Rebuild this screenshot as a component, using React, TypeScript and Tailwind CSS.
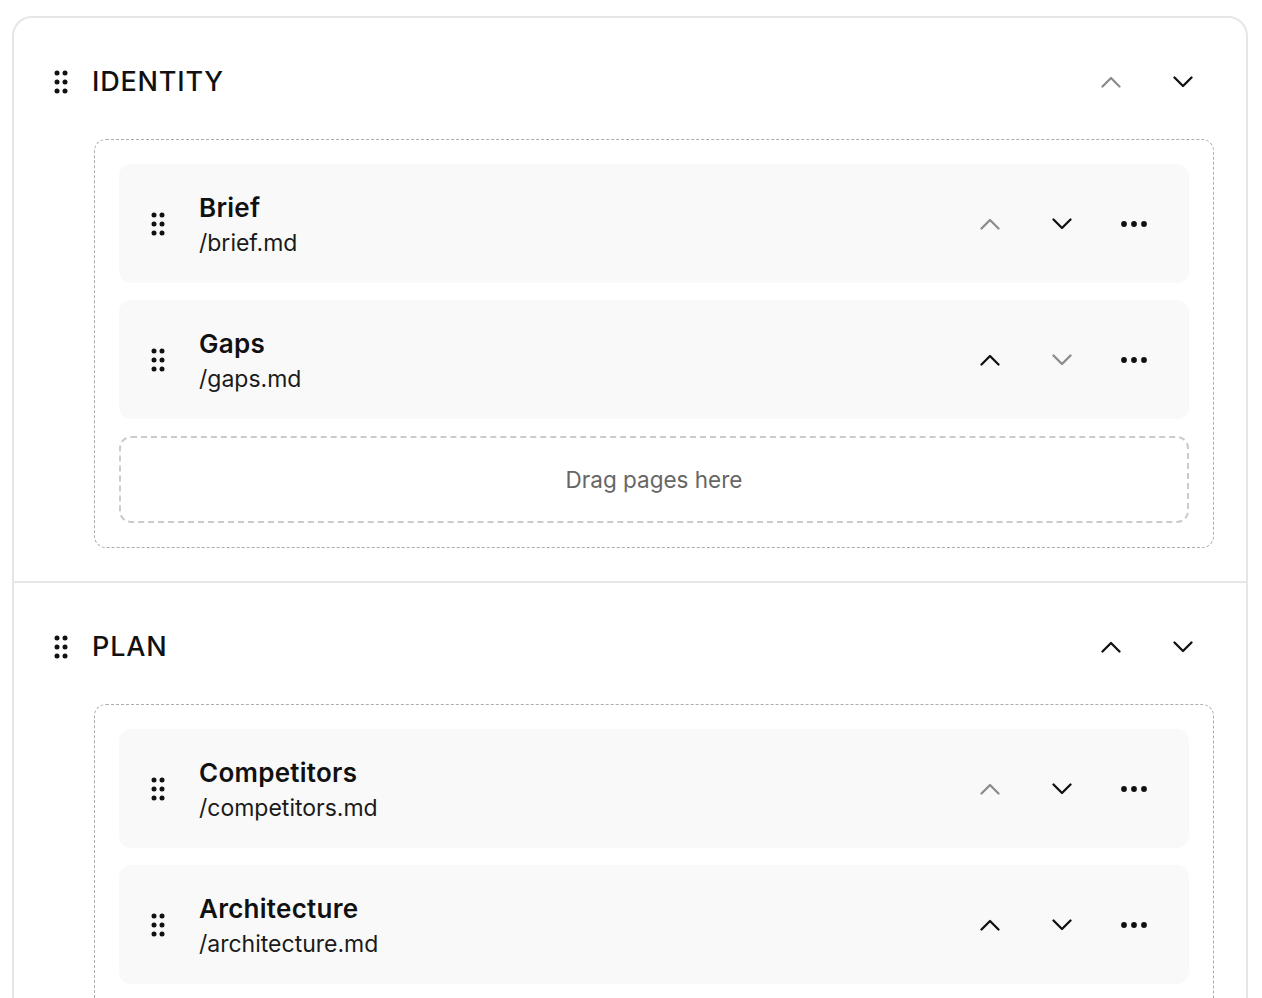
type Page = { title: string; path: string };

type Section = { name: string; pages: Page[] };

const SECTIONS: Section[] = [
  {
    name: 'IDENTITY',
    pages: [
      { title: 'Brief', path: '/brief.md' },
      { title: 'Gaps', path: '/gaps.md' },
    ],
  },
  {
    name: 'PLAN',
    pages: [
      { title: 'Competitors', path: '/competitors.md' },
      { title: 'Architecture', path: '/architecture.md' },
      { title: 'Roadmap', path: '/roadmap.md' },
    ],
  },
  {
    name: 'LAUNCH',
    pages: [{ title: 'Checklist', path: '/checklist.md' }],
  },
];

function Grip() {
  return (
    <svg width="14" height="24" viewBox="0 0 14 24" className="shrink-0 text-[#111]" fill="currentColor">
      <circle cx="3" cy="3" r="2.5" />
      <circle cx="11" cy="3" r="2.5" />
      <circle cx="3" cy="12" r="2.5" />
      <circle cx="11" cy="12" r="2.5" />
      <circle cx="3" cy="21" r="2.5" />
      <circle cx="11" cy="21" r="2.5" />
    </svg>
  );
}

function Chevron({ up, muted }: { up?: boolean; muted?: boolean }) {
  return (
    <button className={`w-12 h-12 flex items-center justify-center ${muted ? 'text-[#8c8c8c]' : 'text-[#111]'}`}>
      <svg width="20" height="12" viewBox="0 0 20 12" fill="none" stroke="currentColor" strokeWidth="2.3" strokeLinecap="round" strokeLinejoin="round">
        {up ? <polyline points="1.5,10.5 10,2 18.5,10.5" /> : <polyline points="1.5,1.5 10,10 18.5,1.5" />}
      </svg>
    </button>
  );
}

function PageRow({ page, first, last }: { page: Page; first: boolean; last: boolean }) {
  return (
    <div className="h-[119px] shrink-0 rounded-xl bg-[#f9f9f9] flex items-center pl-[32px] pr-[31px]">
      <Grip />
      <div className="ml-[34px] flex-1 flex flex-col pt-1">
        <span className="text-[26px] leading-[32px] font-semibold tracking-[0.01em] text-[#111]">{page.title}</span>
        <span className="mt-[3px] text-[23px] leading-[32px] text-[#1a1a1a]">{page.path}</span>
      </div>
      <div className="flex items-center gap-6">
        <Chevron up muted={first} />
        <Chevron muted={last} />
        <button className="w-12 h-12 flex items-center justify-center text-[#111]">
          <svg width="28" height="8" viewBox="0 0 28 8" fill="currentColor">
            <circle cx="4" cy="4" r="2.9" />
            <circle cx="14" cy="4" r="2.9" />
            <circle cx="24" cy="4" r="2.9" />
          </svg>
        </button>
      </div>
    </div>
  );
}

function SectionBlock({ section, first, last }: { section: Section; first: boolean; last: boolean }) {
  return (
    <div className={`pt-10 pb-[33px] pl-10 pr-8 ${first ? '' : 'border-t-2 border-[#e6e6e6]'}`}>
      <div className="h-12 flex items-center pr-[7px]">
        <Grip />
        <h2 className="ml-6 flex-1 text-[27px] font-medium tracking-[0.03em] text-[#111]">{section.name}</h2>
        <div className="flex items-center gap-6">
          <Chevron up muted={first} />
          <Chevron muted={last} />
        </div>
      </div>
      <div className="mt-[33px] ml-10 rounded-xl border border-dashed border-[#adadad] p-6 flex flex-col gap-[17px]">
        {section.pages.map((p, i) => (
          <PageRow key={p.path} page={p} first={i === 0} last={i === section.pages.length - 1} />
        ))}
        <div className="h-[87px] shrink-0 rounded-xl border-[2.5px] border-dashed border-[#cbcbcb] flex items-center justify-center text-[22.5px] text-[#666]">
          Drag pages here
        </div>
      </div>
    </div>
  );
}

export default function App() {
  return (
    <div className="h-screen overflow-hidden bg-white pt-4 pl-3 pr-[14px] font-['Inter',sans-serif]">
      <div className="rounded-[20px] border-2 border-[#e6e6e6] bg-white">
        {SECTIONS.map((s, i) => (
          <SectionBlock key={s.name} section={s} first={i === 0} last={i === SECTIONS.length - 1} />
        ))}
      </div>
    </div>
  );
}
